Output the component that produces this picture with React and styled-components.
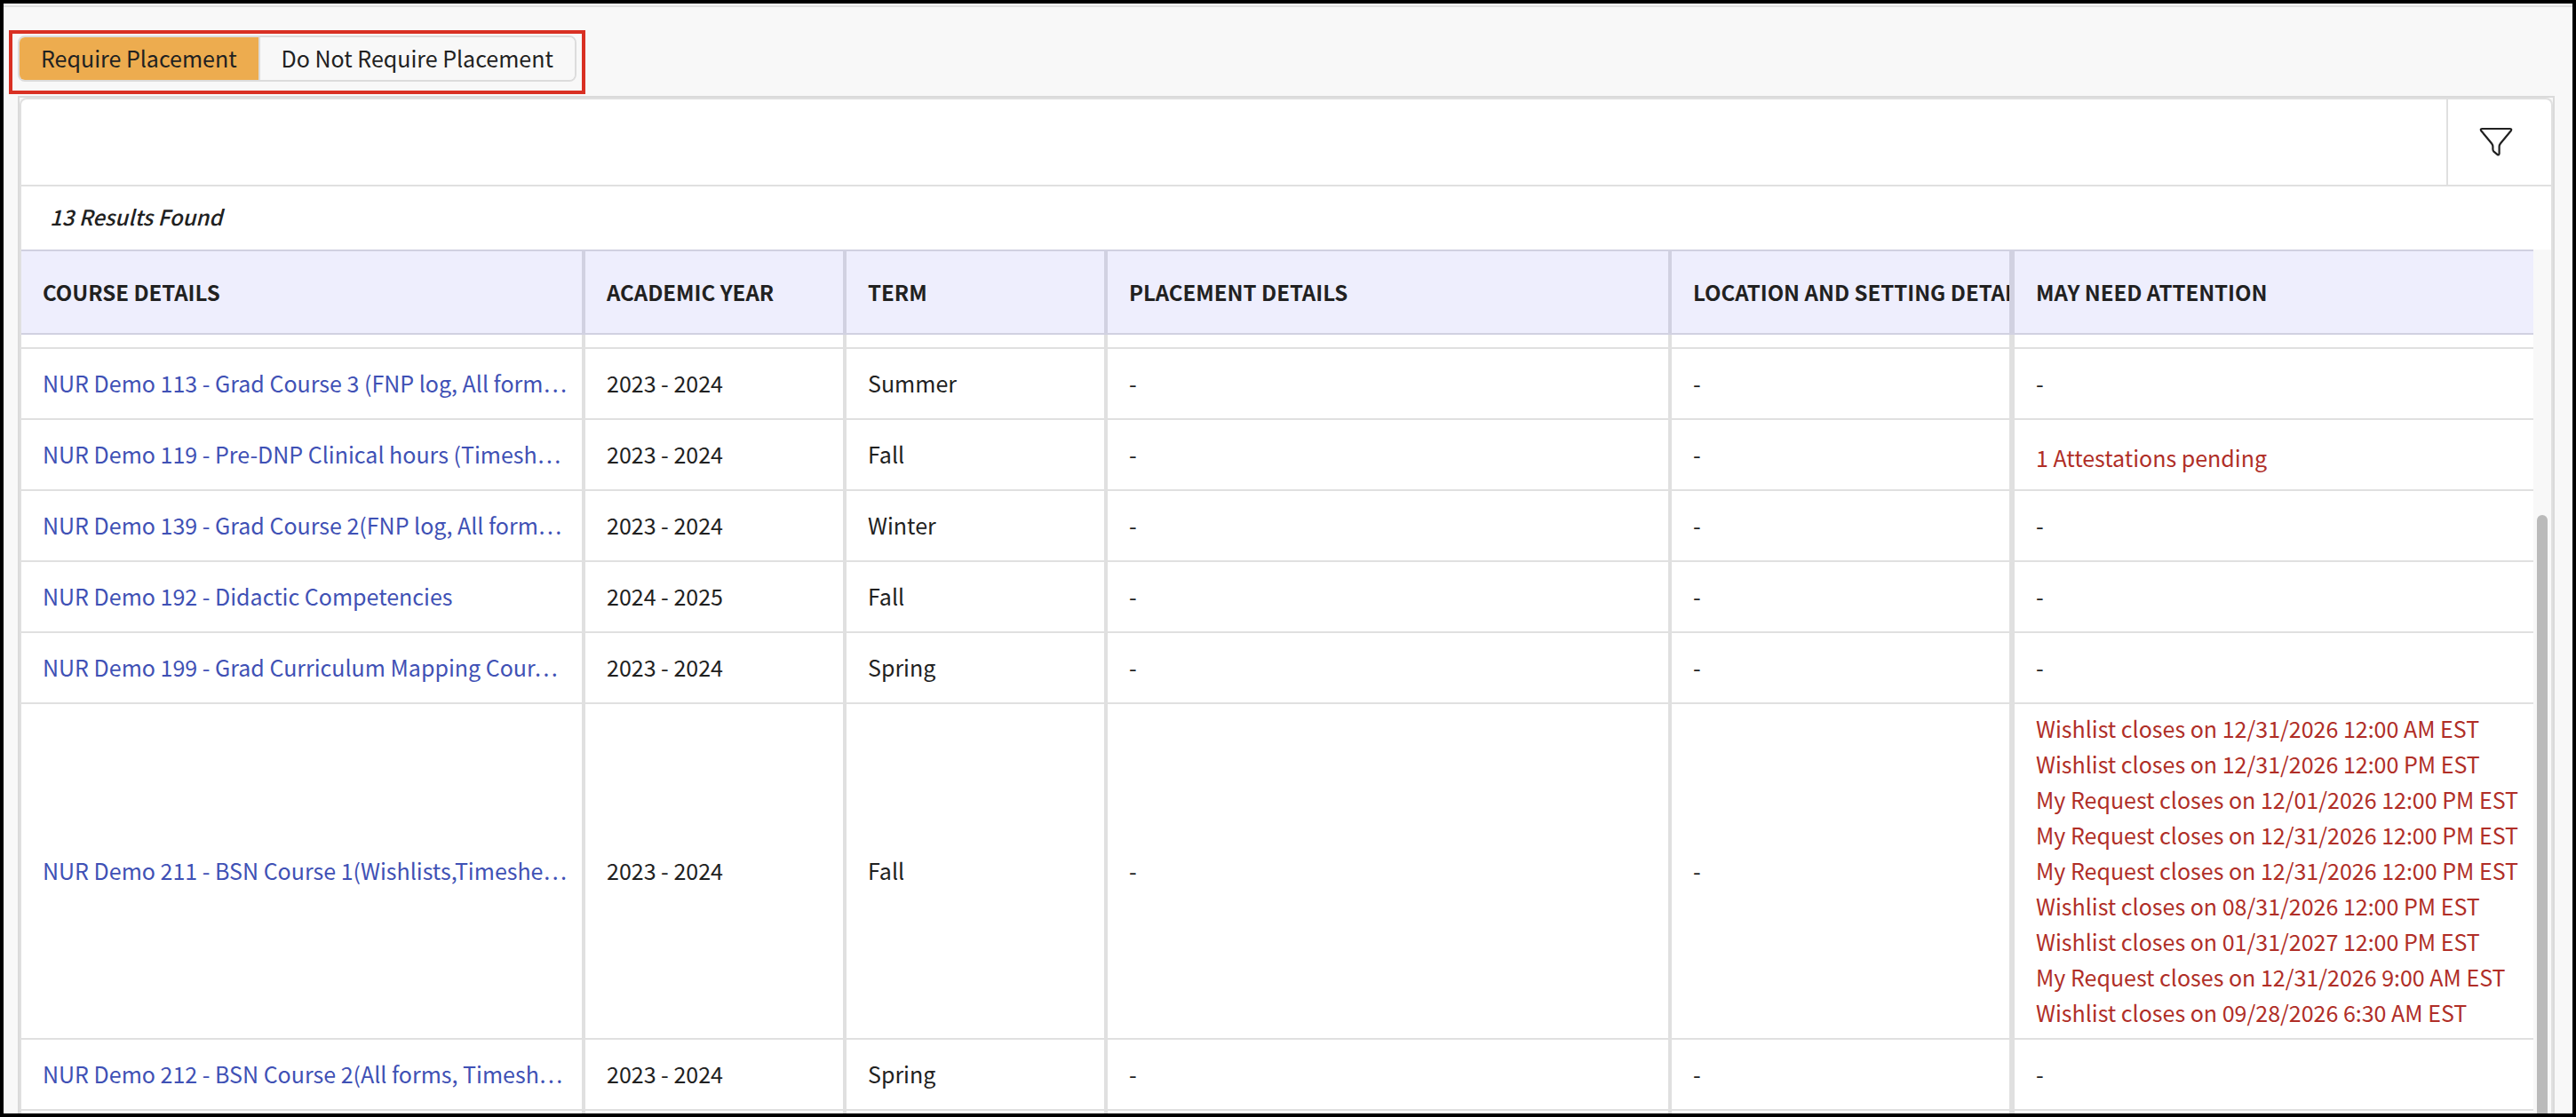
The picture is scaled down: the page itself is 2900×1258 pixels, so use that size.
import React, { useState } from "react";
import styled, { createGlobalStyle } from "styled-components";

const GlobalStyle = createGlobalStyle`
  * {
    box-sizing: border-box;
  }
  body {
    margin: 0;
    color: #212121;
    font-family: "Noto Sans CJK KR", "Noto Sans", sans-serif;
    font-size: 25px;
    line-height: 40px;
  }
`;

// Page frame
const Page = styled.div`
  display: flex;
  flex-direction: column;
  height: 100vh;
  overflow: hidden;
  border: 4px solid #000;
  background: #fff;
  padding-top: 2px;
`;

const Content = styled.main`
  flex: 1;
  min-height: 0;
  display: flex;
  flex-direction: column;
  align-items: flex-start;
  gap: 2px;
  border-top: 2px solid #e0e0e0;
  background: #f8f8f8;
  padding: 26px 20px 0 6px;
`;

// Tabs
const TabsOutline = styled.div`
  border: 4px solid #d93023;
  padding: 2px 6px 10px;
`;

const Tabs = styled.div`
  display: flex;
  overflow: hidden;
  border: 2px solid #dcdcdc;
  border-radius: 8px;
`;

const Tab = styled.button`
  height: 48px;
  padding: 0 24px 2px;
  border: none;
  background: ${(props) => (props.$active ? "#edac4f" : "#f8f8f8")};
  color: inherit;
  font: inherit;
  cursor: pointer;
  & + & {
    border-left: 2px solid #dcdcdc;
  }
`;

// Panel
const Panel = styled.section`
  flex: 1;
  min-height: 0;
  align-self: stretch;
  display: flex;
  flex-direction: column;
  margin-left: 10px;
  border: 2px solid #dadada;
  border-bottom: none;
`;

const PanelInner = styled.div`
  flex: 1;
  min-height: 0;
  display: flex;
  flex-direction: column;
  border: 2px solid #e0e0e0;
  border-bottom: none;
  border-radius: 8px 8px 0 0;
  background: #fff;
`;

const Toolbar = styled.div`
  display: flex;
  justify-content: flex-end;
  height: 98px;
  flex-shrink: 0;
  border-bottom: 2px solid #e0e0e0;
`;

const FilterButton = styled.button`
  display: flex;
  align-items: center;
  justify-content: center;
  width: 118px;
  padding: 0 8px 0 0;
  border: none;
  border-left: 2px solid #e0e0e0;
  background: none;
  color: #212121;
  cursor: pointer;
`;

const ResultCount = styled.p`
  margin: 0;
  padding: 14px 32px 17px;
  font-size: 24px;
  font-style: italic;
  font-weight: 500;
`;

const TableArea = styled.div`
  flex: 1;
  min-height: 0;
  display: flex;
`;

const TableScroll = styled.div`
  flex: 1;
  min-width: 0;
  overflow: hidden;
`;

const ScrollTrack = styled.div`
  display: flex;
  width: 20px;
  padding: 299px 4px 0;
  background: #f8f8f8;
`;

const ScrollThumb = styled.div`
  flex: 1;
  border-radius: 6px 6px 0 0;
  background: #bababa;
`;

// Table
const Table = styled.table`
  width: 100%;
  table-layout: fixed;
  border-collapse: separate;
  border-spacing: 0;
`;

const Col = styled.col`
  width: ${(props) => props.$width};
`;

const HeadCell = styled.th`
  height: 96px;
  padding: 0 24px;
  overflow: hidden;
  border: solid #d1d1e1;
  border-width: 2px 4px 2px 0;
  background: #eeeefd;
  font-size: 24px;
  font-weight: 700;
  text-align: left;
  white-space: nowrap;
  &:nth-child(5) {
    border-right-width: 6px;
  }
  &:last-child {
    border-right: none;
  }
`;

const Row = styled.tr`
  height: ${(props) => (props.$partial ? "16px" : "80px")};
`;

const Cell = styled.td`
  padding: 0 24px 2px;
  overflow: hidden;
  border: solid #e0e0e0;
  border-width: 0 4px 2px 0;
  white-space: nowrap;
  &:nth-child(5) {
    border-right-width: 6px;
  }
  &:last-child {
    border-right: none;
  }
`;

const CourseLink = styled.a`
  color: #3f51b5;
  text-decoration: none;
`;

const AlertList = styled.ul`
  margin: 0;
  padding: 7px 0;
  list-style: none;
  color: #b02e27;
`;

const Alert = styled.li`
  &:only-child {
    padding-top: 8px;
  }
`;

const columns = [
  { label: "COURSE DETAILS", width: "635px" },
  { label: "ACADEMIC YEAR", width: "294px" },
  { label: "TERM", width: "294px" },
  { label: "PLACEMENT DETAILS", width: "635px" },
  { label: "LOCATION AND SETTING DETAILS", width: "386px" },
  { label: "MAY NEED ATTENTION", width: "auto" },
];

const courses = [
  { name: "NUR Demo 113 - Grad Course 3 (FNP log, All form…", year: "2023 - 2024", term: "Summer" },
  {
    name: "NUR Demo 119 - Pre-DNP Clinical hours (Timesh…",
    year: "2023 - 2024",
    term: "Fall",
    alerts: ["1 Attestations pending"],
  },
  { name: "NUR Demo 139 - Grad Course 2(FNP log, All form…", year: "2023 - 2024", term: "Winter" },
  { name: "NUR Demo 192 - Didactic Competencies", year: "2024 - 2025", term: "Fall" },
  { name: "NUR Demo 199 - Grad Curriculum Mapping Cour…", year: "2023 - 2024", term: "Spring" },
  {
    name: "NUR Demo 211 - BSN Course 1(Wishlists,Timeshe…",
    year: "2023 - 2024",
    term: "Fall",
    alerts: [
      "Wishlist closes on 12/31/2026 12:00 AM EST",
      "Wishlist closes on 12/31/2026 12:00 PM EST",
      "My Request closes on 12/01/2026 12:00 PM EST",
      "My Request closes on 12/31/2026 12:00 PM EST",
      "My Request closes on 12/31/2026 12:00 PM EST",
      "Wishlist closes on 08/31/2026 12:00 PM EST",
      "Wishlist closes on 01/31/2027 12:00 PM EST",
      "My Request closes on 12/31/2026 9:00 AM EST",
      "Wishlist closes on 09/28/2026 6:30 AM EST",
    ],
  },
  { name: "NUR Demo 212 - BSN Course 2(All forms, Timesh…", year: "2023 - 2024", term: "Spring" },
];

const tabs = ["Require Placement", "Do Not Require Placement"];

const FilterIcon = () => (
  <svg width="38" height="34" viewBox="0 0 38 34" fill="none" stroke="currentColor" strokeWidth="2.2" strokeLinejoin="round">
    <path d="M3.5 2H34.5Q37 2 35.8 4.2L24 18.5Q22.6 20.2 22.6 22V30Q22.4 32 20.6 31.2L16.4 27.6Q15.4 26.6 15.4 25V22Q15.4 20.2 14 18.5L2.2 4.2Q1 2 3.5 2Z" />
  </svg>
);

// Row cut off by the scroll position
const PartialRow = () => (
  <Row $partial>
    {columns.map((column) => (
      <Cell key={column.label} />
    ))}
  </Row>
);

const CourseRow = ({ course }) => (
  <Row>
    <Cell>
      <CourseLink href="#">{course.name}</CourseLink>
    </Cell>
    <Cell>{course.year}</Cell>
    <Cell>{course.term}</Cell>
    <Cell>-</Cell>
    <Cell>-</Cell>
    <Cell>
      {course.alerts ? (
        <AlertList>
          {course.alerts.map((alert, index) => (
            <Alert key={index}>{alert}</Alert>
          ))}
        </AlertList>
      ) : (
        "-"
      )}
    </Cell>
  </Row>
);

const App = () => {
  const [activeTab, setActiveTab] = useState(tabs[0]);

  return (
    <>
      <GlobalStyle />
      <Page>
        <Content>
          <TabsOutline>
            <Tabs>
              {tabs.map((tab) => (
                <Tab key={tab} type="button" $active={tab === activeTab} onClick={() => setActiveTab(tab)}>
                  {tab}
                </Tab>
              ))}
            </Tabs>
          </TabsOutline>
          <Panel>
            <PanelInner>
              <Toolbar>
                <FilterButton type="button" aria-label="Filter">
                  <FilterIcon />
                </FilterButton>
              </Toolbar>
              <ResultCount>13 Results Found</ResultCount>
              <TableArea>
                <TableScroll>
                  <Table>
                    <colgroup>
                      {columns.map((column) => (
                        <Col key={column.label} $width={column.width} />
                      ))}
                    </colgroup>
                    <thead>
                      <tr>
                        {columns.map((column) => (
                          <HeadCell key={column.label} scope="col">
                            {column.label}
                          </HeadCell>
                        ))}
                      </tr>
                    </thead>
                    <tbody>
                      <PartialRow />
                      {courses.map((course) => (
                        <CourseRow key={course.name} course={course} />
                      ))}
                      <PartialRow />
                    </tbody>
                  </Table>
                </TableScroll>
                <ScrollTrack>
                  <ScrollThumb />
                </ScrollTrack>
              </TableArea>
            </PanelInner>
          </Panel>
        </Content>
      </Page>
    </>
  );
};

export default App;
